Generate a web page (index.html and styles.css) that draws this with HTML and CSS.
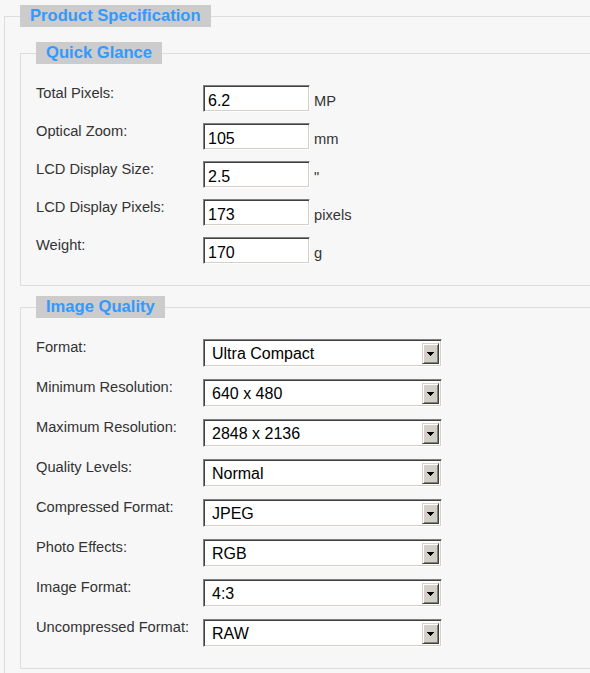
FILE: index.html
```html
<!DOCTYPE html>
<html lang="en">
<head>
<meta charset="utf-8">
<title>Product Specification</title>
<link rel="stylesheet" href="styles.css">
</head>
<body>
<fieldset class="spec">
  <legend class="legend">Product Specification</legend>

  <fieldset class="group">
    <legend class="legend">Quick Glance</legend>
    <div class="rows rows-text">
      <label class="label">Total Pixels:</label>
      <div class="field"><input class="text" type="text" value="6.2"><span class="unit">MP</span></div>
      <label class="label">Optical Zoom:</label>
      <div class="field"><input class="text" type="text" value="105"><span class="unit">mm</span></div>
      <label class="label">LCD Display Size:</label>
      <div class="field"><input class="text" type="text" value="2.5"><span class="unit">"</span></div>
      <label class="label">LCD Display Pixels:</label>
      <div class="field"><input class="text" type="text" value="173"><span class="unit">pixels</span></div>
      <label class="label">Weight:</label>
      <div class="field"><input class="text" type="text" value="170"><span class="unit">g</span></div>
    </div>
  </fieldset>

  <fieldset class="group">
    <legend class="legend">Image Quality</legend>
    <div class="rows rows-select">
      <label class="label">Format:</label>
      <div class="select"><span class="select-value">Ultra Compact</span><span class="select-btn"><svg width="7" height="4" viewBox="0 0 7 4"><path d="M0 0h7v1h-1v1h-1v1h-1v1h-1v-1h-1v-1h-1v-1h-1z" fill="#000"/></svg></span></div>
      <label class="label">Minimum Resolution:</label>
      <div class="select"><span class="select-value">640 x 480</span><span class="select-btn"><svg width="7" height="4" viewBox="0 0 7 4"><path d="M0 0h7v1h-1v1h-1v1h-1v1h-1v-1h-1v-1h-1v-1h-1z" fill="#000"/></svg></span></div>
      <label class="label">Maximum Resolution:</label>
      <div class="select"><span class="select-value">2848 x 2136</span><span class="select-btn"><svg width="7" height="4" viewBox="0 0 7 4"><path d="M0 0h7v1h-1v1h-1v1h-1v1h-1v-1h-1v-1h-1v-1h-1z" fill="#000"/></svg></span></div>
      <label class="label">Quality Levels:</label>
      <div class="select"><span class="select-value">Normal</span><span class="select-btn"><svg width="7" height="4" viewBox="0 0 7 4"><path d="M0 0h7v1h-1v1h-1v1h-1v1h-1v-1h-1v-1h-1v-1h-1z" fill="#000"/></svg></span></div>
      <label class="label">Compressed Format:</label>
      <div class="select"><span class="select-value">JPEG</span><span class="select-btn"><svg width="7" height="4" viewBox="0 0 7 4"><path d="M0 0h7v1h-1v1h-1v1h-1v1h-1v-1h-1v-1h-1v-1h-1z" fill="#000"/></svg></span></div>
      <label class="label">Photo Effects:</label>
      <div class="select"><span class="select-value">RGB</span><span class="select-btn"><svg width="7" height="4" viewBox="0 0 7 4"><path d="M0 0h7v1h-1v1h-1v1h-1v1h-1v-1h-1v-1h-1v-1h-1z" fill="#000"/></svg></span></div>
      <label class="label">Image Format:</label>
      <div class="select"><span class="select-value">4:3</span><span class="select-btn"><svg width="7" height="4" viewBox="0 0 7 4"><path d="M0 0h7v1h-1v1h-1v1h-1v1h-1v-1h-1v-1h-1v-1h-1z" fill="#000"/></svg></span></div>
      <label class="label">Uncompressed Format:</label>
      <div class="select"><span class="select-value">RAW</span><span class="select-btn"><svg width="7" height="4" viewBox="0 0 7 4"><path d="M0 0h7v1h-1v1h-1v1h-1v1h-1v-1h-1v-1h-1v-1h-1z" fill="#000"/></svg></span></div>
    </div>
  </fieldset>
</fieldset>
</body>
</html>
```

FILE: styles.css
```css
html, body {
  margin: 0;
  padding: 0;
  overflow: hidden;
  background: #f7f7f7;
}

body {
  font-family: "Liberation Sans", Arial, sans-serif;
  color: #333333;
}

.spec {
  width: 640px;
  margin: 5px 0 0 4px;
  padding: 15px 15px 60px 15px;
  border: 1px solid #dddddd;
  min-inline-size: 0;
}

.legend {
  margin: 0;
  padding: 0 10px;
  height: 22px;
  line-height: 22px;
  background: #cccccc;
  color: #3399ff;
  font-family: "Liberation Sans", Arial, sans-serif;
  font-size: 16.6px;
  font-weight: bold;
}

.group {
  margin: 0 0 10px 0;
  padding: 21px 15px 21px 15px;
  border: 1px solid #dddddd;
  min-inline-size: 0;
}

.rows {
  display: grid;
  grid-template-columns: 167px 1fr;
  align-items: start;
}

.rows-text {
  row-gap: 11px;
}

.rows-select {
  row-gap: 12px;
}

.label {
  font-size: 14.67px;
  line-height: 17px;
  color: #333333;
}

.field {
  display: flex;
  align-items: baseline;
  gap: 4px;
}

.text {
  box-sizing: border-box;
  width: 107px;
  height: 27px;
  margin: 0;
  padding: 4px 3px 0 4px;
  line-height: 19px;
  font-family: "Liberation Sans", Arial, sans-serif;
  font-size: 16px;
  color: #000000;
  background: #ffffff;
  border: 1px solid;
  border-color: #808080 #ffffff #ffffff #808080;
  box-shadow: inset 1px 1px 0 #404040, inset -1px -1px 0 #d4d0c8;
  outline: none;
}

.unit {
  font-size: 14.67px;
  color: #333333;
}

.select {
  box-sizing: border-box;
  display: flex;
  align-items: flex-start;
  width: 239px;
  height: 28px;
  background: #ffffff;
  border: 1px solid;
  border-color: #808080 #ffffff #ffffff #808080;
  box-shadow: inset 1px 1px 0 #404040, inset -1px -1px 0 #d4d0c8;
  padding: 1px;
}

.select-value {
  flex: 1;
  padding: 1px 0 0 7px;
  line-height: 23px;
  font-size: 16px;
  color: #000000;
}

.select-btn {
  box-sizing: border-box;
  display: flex;
  align-items: center;
  justify-content: center;
  width: 17px;
  height: 21px;
  margin-top: 2px;
  margin-right: 1px;
  background: #d4d0c8;
  border: 1px solid;
  border-color: #d4d0c8 #404040 #404040 #d4d0c8;
  box-shadow: inset 1px 1px 0 #ffffff, inset -1px -1px 0 #808080;
}

.select-btn svg {
  display: block;
  margin-top: 1px;
}
```
